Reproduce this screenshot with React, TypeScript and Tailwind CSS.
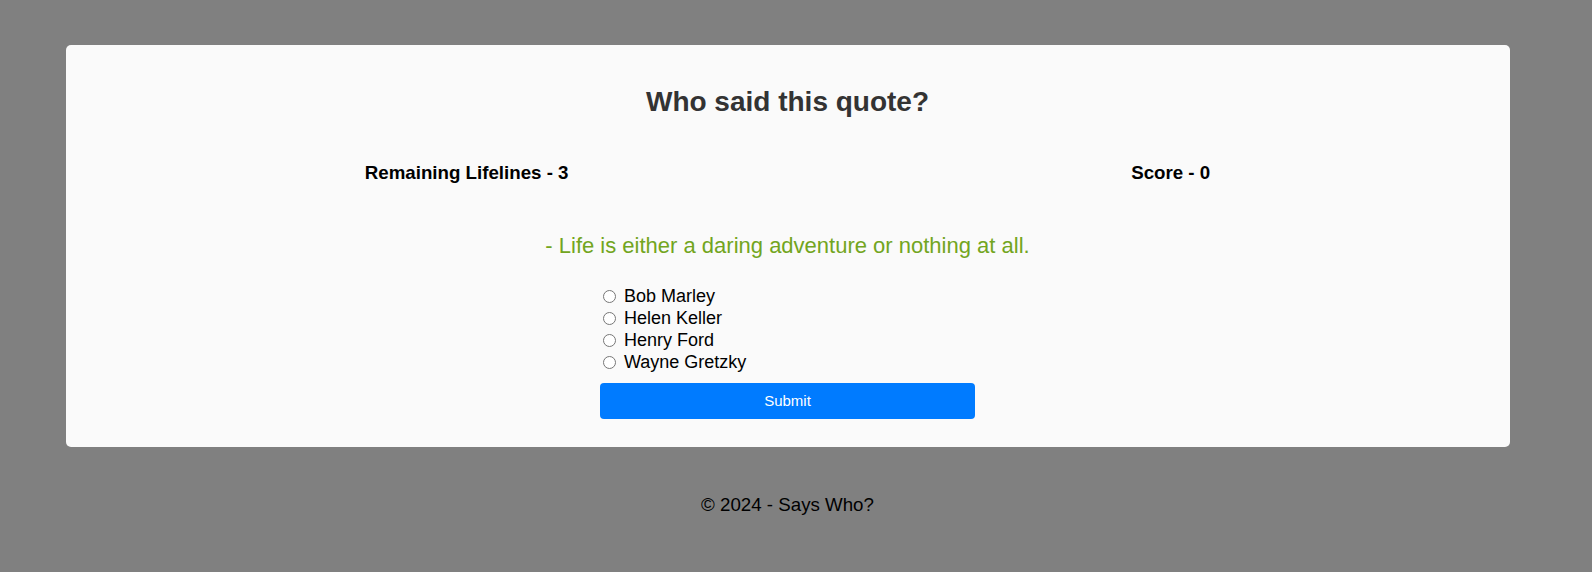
import React from "react";

export default function App() {
  const options = ["Bob Marley", "Helen Keller", "Henry Ford", "Wayne Gretzky"];
  return (
    <div className="min-h-screen h-[572px] bg-[#808080] text-black" style={{ fontFamily: '"Liberation Sans", Arial, sans-serif' }}>
      <div className="w-[1575px] pt-[45px]">
        <div className="mx-auto w-[1444px] rounded-[5px] bg-[#fafafa] px-[18px] pt-[41px] pb-[28px]">
          <h2 className="text-center text-[28px] leading-[32px] font-bold text-[#333333]">Who said this quote?</h2>
          <div className="mt-[44px] flex justify-around text-[18.72px] leading-[21.5px] font-bold">
            <div>Remaining Lifelines - 3</div>
            <div>Score - 0</div>
          </div>
          <p className="mt-[49px] text-center text-[22px] leading-[25.3px] text-[#72a520]">
            - Life is either a daring adventure or nothing at all.
          </p>
          <form className="mx-auto mt-[27px] w-[375px]" onSubmit={(e) => e.preventDefault()}>
            <div className="flex flex-col">
              {options.map((o) => (
                <label key={o} className="flex items-center text-[18px] leading-[22px]">
                  <input type="radio" name="answer" className="ml-[3px] h-[13px] w-[13px] translate-y-[1px] m-0" />
                  <span className="ml-[8px]">{o}</span>
                </label>
              ))}
            </div>
            <button
              type="submit"
              className="mt-[10px] h-[36px] w-full rounded-[4px] bg-[#007bff] text-[15px] leading-[36px] text-white"
            >
              Submit
            </button>
          </form>
        </div>
        <footer className="mt-[47px] text-center text-[18.72px] leading-[21.5px] text-black">© 2024 - Says Who?</footer>
      </div>
    </div>
  );
}
